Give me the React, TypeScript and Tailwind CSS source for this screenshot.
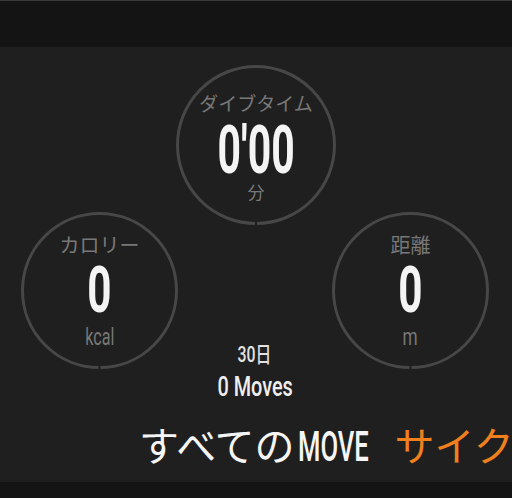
import React from "react";

const JP = "font-['Noto_Sans_CJK_JP',sans-serif]";
const NUM = "font-['Roboto','Noto_Sans_CJK_JP',sans-serif]";

function Ring({ size }: { size: number }) {
  const c = size / 2;
  return (
    <svg className="absolute inset-0" width={size} height={size} viewBox={`0 0 ${size} ${size}`}>
      <circle cx={c} cy={c} r={c - 1.5} fill="none" stroke="#474747" strokeWidth={3} />
      <rect x={c - 1} y={size - 5} width={2} height={6} fill="#1f1f1f" />
    </svg>
  );
}

export default function App() {
  return (
    <div className="w-[512px] h-[498px] bg-[#1f1f1f] flex flex-col overflow-hidden">
      <div className="h-px bg-[#3a3a3a]" />
      <div className="h-[46px] bg-[#141414]" />
      <div className="h-[363px] flex flex-col">
        <div className="flex justify-center pt-[18px]">
          <div className="relative w-[160px] h-[160px]">
            <Ring size={160} />
            <div className="relative flex flex-col items-center pt-[28px]">
              <div className={`${JP} text-[19px] leading-[19px] text-[#787878] whitespace-nowrap`}>ダイブタイム</div>
              <div className={`${NUM} mt-[15px] text-[66px] leading-[48px] font-bold text-[#f4f4f4] inline-block scale-x-[0.62] whitespace-nowrap`}>0'00</div>
              <div className={`${JP} mt-[8px] text-[17px] leading-[17px] text-[#787878]`}>分</div>
            </div>
          </div>
        </div>
        <div className="flex -mt-[13px]">
          <div className="relative w-[157px] h-[157px] ml-[21px] shrink-0">
            <Ring size={157} />
            <div className="relative flex flex-col items-center pt-[23px]">
              <div className={`${JP} text-[20px] leading-[20px] text-[#787878] whitespace-nowrap`}>カロリー</div>
              <div className={`${NUM} mt-[13px] text-[64px] leading-[46px] font-bold text-[#f4f4f4] inline-block scale-x-[0.66]`}>0</div>
              <div className={`${NUM} mt-[12px] text-[23px] leading-[23px] text-[#787878] inline-block scale-x-[0.7]`}>kcal</div>
            </div>
          </div>
          <div className="flex-1 flex flex-col items-center pt-[132px]">
            <div className={`${NUM} text-[22px] leading-[22px] font-medium text-[#e2e2e2] inline-block scale-x-[0.72] whitespace-nowrap`}>30日</div>
            <div className={`${NUM} mt-[7px] text-[28px] leading-[28px] font-medium text-[#efefef] inline-block scale-x-[0.71] whitespace-nowrap`}>0 Moves</div>
          </div>
          <div className="relative w-[157px] h-[157px] mr-[23px] shrink-0">
            <Ring size={157} />
            <div className="relative flex flex-col items-center pt-[23px]">
              <div className={`${JP} text-[20px] leading-[20px] text-[#787878] whitespace-nowrap`}>距離</div>
              <div className={`${NUM} mt-[13px] text-[64px] leading-[46px] font-bold text-[#f4f4f4] inline-block scale-x-[0.66]`}>0</div>
              <div className={`${NUM} mt-[12px] text-[23px] leading-[23px] text-[#787878] inline-block scale-x-[0.75]`}>m</div>
            </div>
          </div>
        </div>
      </div>
      <div className="h-[72px] overflow-hidden flex items-baseline pt-[14px] pl-[139px] whitespace-nowrap">
        <span className={`${JP} text-[40px] leading-[40px] text-[#f5f5f5]`}>すべての</span>
        <span className="inline-block w-[75px] ml-[3px] shrink-0">
          <span className={`${NUM} inline-block origin-left scale-x-[0.61] text-[42px] leading-[40px] font-medium text-[#f5f5f5]`}>MOVE</span>
        </span>
        <span className={`${JP} ml-[22px] text-[40px] leading-[40px] text-[#f0801e]`}>サイクリング</span>
      </div>
      <div className="h-[16px] bg-[#141414]" />
    </div>
  );
}
